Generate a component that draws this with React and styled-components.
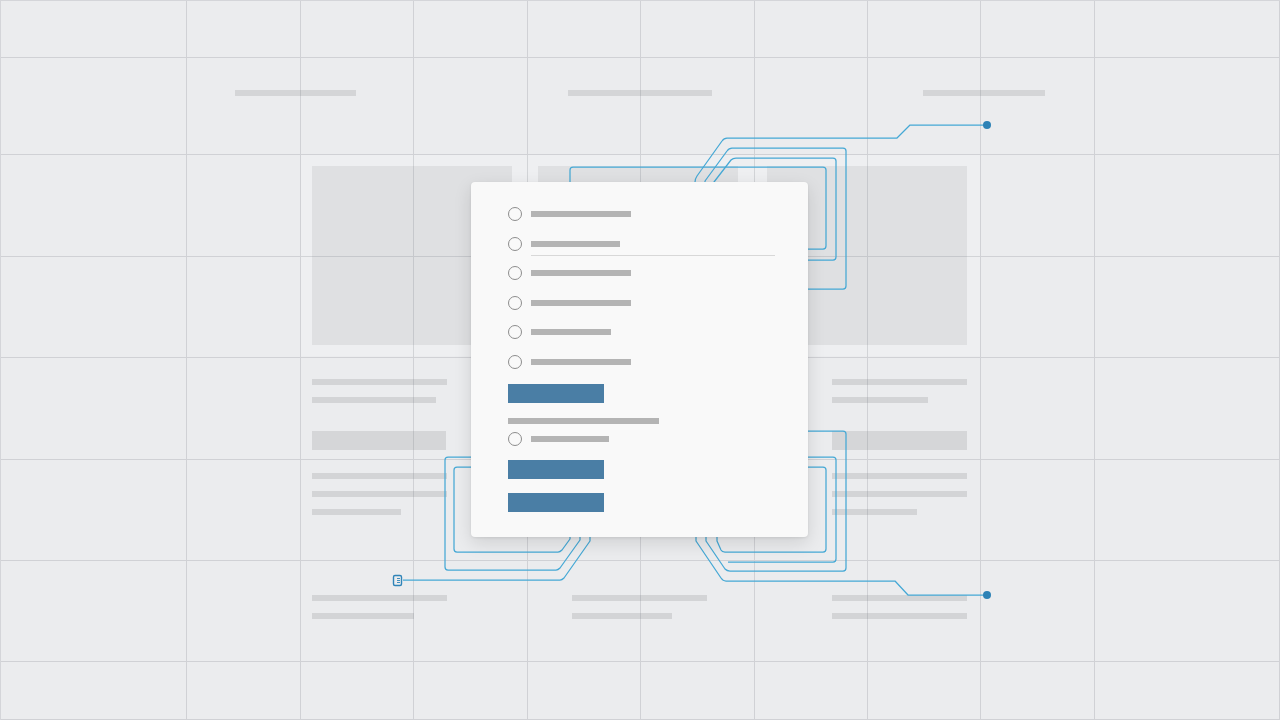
import React from 'react'
import styled, { createGlobalStyle } from 'styled-components'

const GlobalStyle = createGlobalStyle`
  html, body {
    margin: 0;
    padding: 0;
    background: #ebecee;
    overflow: hidden;
    font-family: "Liberation Sans", Arial, sans-serif;
  }
`

const COLS = '186px 114px 113px 114px 113px 114px 113px 113px 114px 1fr'
const ROWS = '57px 97px 102px 101px 102px 101px 101px 1fr'

const leftCol = [
    { w: 135 }, { w: 124 }, { w: 134, block: true }, { w: 135 }, { w: 135 }, { w: 89 }
]
const midCol = [
    { w: 135 }, { w: 110 }, { w: 134, block: true }, { w: 135 }, { w: 135 }, { w: 90 }
]
const rightCol = [
    { w: 135 }, { w: 96 }, { w: 135, block: true }, { w: 135 }, { w: 135 }, { w: 85 }
]
const footer = [[135, 102], [135, 100], [135, 135]]

const options = [100, 89, 100, 100, 80, 100]

export default function App() {
    return (
        <>
            <GlobalStyle />
            <Stage>
                <Content>
                    <NavRow>
                        <NavBar $w={121} />
                        <NavBar $w={144} />
                        <NavBar $w={122} $shift />
                    </NavRow>
                    <ImageRow>
                        <ImageFrame><ImageBlock /></ImageFrame>
                        <ImageFrame><ImageBlock /></ImageFrame>
                        <ImageFrame $wide><ImageBlock /></ImageFrame>
                    </ImageRow>
                    <TextGrid>
                        {[leftCol, midCol, rightCol].map((col, i) => (
                            <TextCol key={i}>
                                {col.map((l, j) =>
                                    l.block
                                        ? <TextBlock key={j} $w={l.w} />
                                        : <TextLine key={j} $w={l.w} $after={j === 3} />
                                )}
                            </TextCol>
                        ))}
                    </TextGrid>
                    <FooterGrid>
                        {footer.map((col, i) => (
                            <TextCol key={i}>
                                {col.map((w, j) => <TextLine key={j} $w={w} />)}
                            </TextCol>
                        ))}
                    </FooterGrid>
                </Content>

                <GridLines>
                    {Array.from({ length: 80 }).map((_, i) => <Cell key={i} />)}
                </GridLines>

                <Traces />

                <Card>
                    <Options>
                        {options.map((w, i) => (
                            <React.Fragment key={i}>
                                <Option>
                                    <Radio />
                                    <OptionBar $w={w} />
                                </Option>
                                {i === 1 && <Rule />}
                            </React.Fragment>
                        ))}
                    </Options>
                    <Button $top={7.5} />
                    <Caption />
                    <Option>
                        <Radio />
                        <OptionBar $w={78} />
                    </Option>
                    <Button $top={6.75} />
                    <Button $top={14} />
                </Card>
            </Stage>
        </>
    )
}

function Traces() {
    return (
        <TraceSvg viewBox="0 0 1280 720" width="1280" height="720">
            <g fill="none" stroke="#45a8d5" strokeWidth="1.25" strokeLinejoin="round">
                {/* top */}
                <path d="M987 125 H910 L897 138 H727 Q724 138 722 141 L697 176 Q695 179 695 182 V190" />
                <path d="M705 190 V181 L727 151 Q729 148 732 148 H843 Q846 148 846 151 V286 Q846 289 843 289 H800" />
                <path d="M714 190 V182 L731 160 Q733 158 736 158 H833 Q836 158 836 161 V257 Q836 260 833 260 H800" />
                <path d="M570 190 V170 Q570 167 573 167 H823 Q826 167 826 170 V246 Q826 249 823 249 H800" />
                {/* bottom left */}
                <path d="M480 457 H448 Q445 457 445 460 V567 Q445 570 448 570 H556 Q558 570 560 568 L580 540 V530" />
                <path d="M480 467 H457 Q454 467 454 470 V549 Q454 552 457 552 H558 Q560 552 562 550 L570 539 V530" />
                <path d="M403 580 H560 Q562 580 564 578 L590 541 V530" />
                {/* bottom right */}
                <path d="M800 431 H843 Q846 431 846 434 V568 Q846 571 843 571 H730 Q727 571 725 569 L706 541 V530" />
                <path d="M800 457 H833 Q836 457 836 460 V559 Q836 562 833 562 H728" />
                <path d="M800 467 H823 Q826 467 826 470 V549 Q826 552 823 552 H725 Q722 552 721 550 L717 541 V530" />
                <path d="M696 530 V541 L721 578 Q723 581 726 581 H895 L908 595 H987" />
                {/* small connector */}
                <rect x="393.5" y="575.5" width="8" height="10" rx="1.5" stroke="#2f84b8" strokeWidth="1.4" />
                <path d="M397 578.5 H400 M397 580.5 H400 M397 582.5 H400" stroke="#2f84b8" strokeWidth="0.9" />
            </g>
            <circle cx="987" cy="125" r="4" fill="#2d82b6" />
            <circle cx="987" cy="595" r="4" fill="#2d82b6" />
        </TraceSvg>
    )
}

const Stage = styled.div`
    position: relative;
    width: 1280px;
    height: 720px;
    display: grid;
    grid-template: 1fr / 1fr;
    background: #ebecee;
    overflow: hidden;
    & > * {
        grid-area: 1 / 1;
    }
`

const Content = styled.div`
    display: flex;
    flex-direction: column;
    padding-top: 90px;
`

const NavRow = styled.div`
    display: flex;
    gap: 212px;
    padding-left: 235px;
`

const NavBar = styled.div`
    width: ${({ $w }) => $w}px;
    height: 6px;
    margin-left: ${({ $shift }) => ($shift ? -1 : 0)}px;
    background: #d4d5d7;
`

const ImageRow = styled.div`
    display: flex;
    margin-top: 59px;
    padding-left: 301px;
`

const ImageFrame = styled.div`
    width: ${({ $wide }) => ($wide ? 227 : 226)}px;
    box-sizing: border-box;
    padding: 11px 15px 11px ${({ $wide }) => ($wide ? 14 : 11)}px;
    background: #eeeff1;
`

const ImageBlock = styled.div`
    width: 200px;
    height: 179px;
    background: #dfe0e2;
`

const TextGrid = styled.div`
    display: grid;
    grid-template-columns: repeat(3, 135px);
    column-gap: 125px;
    padding-left: 312px;
    margin-top: 23px;
`

const FooterGrid = styled(TextGrid)`
    margin-top: 80px;
`

const TextCol = styled.div`
    display: flex;
    flex-direction: column;
    gap: 12px;
`

const TextLine = styled.div`
    width: ${({ $w }) => $w}px;
    height: 6px;
    background: #d3d4d6;
    margin-top: ${({ $after }) => ($after ? 11 : 0)}px;
`

const TextBlock = styled.div`
    width: ${({ $w }) => $w}px;
    height: 19px;
    margin-top: 16px;
    background: #d5d6d8;
`

const GridLines = styled.div`
    display: grid;
    grid-template-columns: ${COLS};
    grid-template-rows: ${ROWS};
    border-top: 1px solid rgba(120, 126, 134, 0.2);
    border-left: 1px solid rgba(120, 126, 134, 0.2);
    pointer-events: none;
`

const Cell = styled.div`
    border-right: 1px solid rgba(120, 126, 134, 0.24);
    border-bottom: 1px solid rgba(120, 126, 134, 0.24);
`

const TraceSvg = styled.svg`
    display: block;
    pointer-events: none;
`

const Card = styled.div`
    position: absolute;
    left: 471px;
    top: 182px;
    width: 337px;
    height: 355px;
    box-sizing: border-box;
    padding: 17.5px 33px 0 37px;
    display: flex;
    flex-direction: column;
    background: #f9f9f9;
    border-radius: 4px;
    box-shadow: 0 6px 18px rgba(0, 0, 0, 0.12), 0 1px 3px rgba(0, 0, 0, 0.08);
`

const Options = styled.div`
    display: flex;
    flex-direction: column;
`

const Option = styled.div`
    display: flex;
    align-items: center;
    gap: 9px;
    height: 29.5px;
`

const Radio = styled.span`
    width: 14px;
    height: 14px;
    box-sizing: border-box;
    border: 1px solid #8d8d8d;
    border-radius: 50%;
    flex-shrink: 0;
`

const OptionBar = styled.span`
    width: ${({ $w }) => $w}px;
    height: 6px;
    background: #b4b4b4;
`

const Rule = styled.div`
    height: 1px;
    margin: -4px 0 3px 23px;
    background: #d8d8d8;
`

const Button = styled.div`
    width: 96px;
    height: 19px;
    margin-top: ${({ $top }) => $top}px;
    background: #4a7ea5;
`

const Caption = styled.div`
    width: 151px;
    height: 6px;
    margin-top: 15px;
    background: #b4b4b4;
`
